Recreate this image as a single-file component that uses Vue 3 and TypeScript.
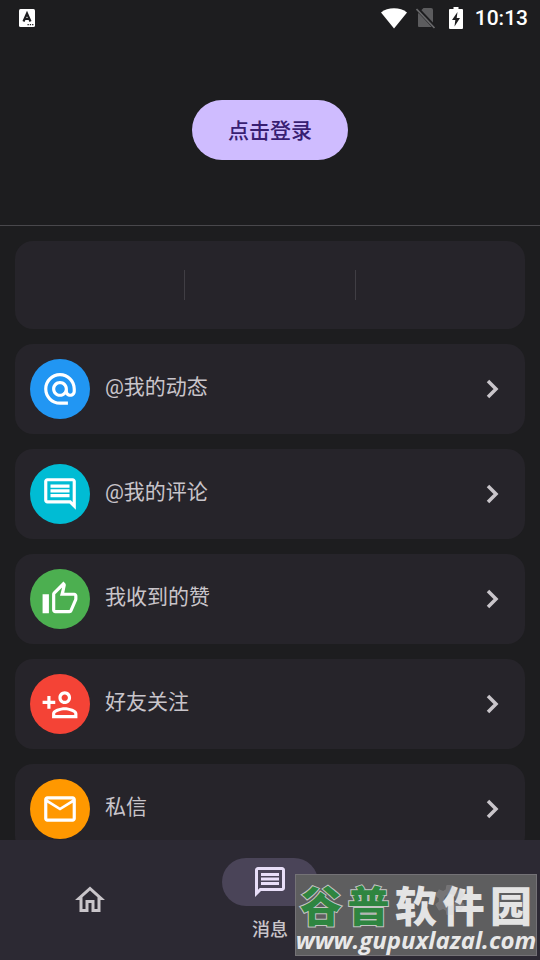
<script setup lang="ts">
interface Entry {
  id: string
  label: string
  color: string
  path: string
}

const entries: Entry[] = [
  {
    id: 'at-feed',
    label: '@我的动态',
    color: '#2196f3',
    path: 'M12 1.95c-5.52 0-10 4.48-10 10s4.48 10 10 10h5v-2h-5c-4.34 0-8-3.66-8-8s3.66-8 8-8 8 3.66 8 8v1.43c0 .79-.71 1.57-1.5 1.57s-1.5-.78-1.5-1.57v-1.43c0-2.76-2.24-5-5-5s-5 2.24-5 5 2.24 5 5 5c1.38 0 2.64-.56 3.54-1.47.65.89 1.77 1.47 2.96 1.47 1.97 0 3.5-1.6 3.5-3.57v-1.43c0-5.52-4.48-10-10-10zm0 13c-1.66 0-3-1.34-3-3s1.34-3 3-3 3 1.34 3 3-1.34 3-3 3z',
  },
  {
    id: 'at-comment',
    label: '@我的评论',
    color: '#00bcd4',
    path: 'M21.99 4c0-1.1-.89-2-1.99-2H4c-1.1 0-2 .9-2 2v12c0 1.1.9 2 2 2h14l4 4-.01-18zM20 4v13.17L18.83 16H4V4h16zM6 12h12v2H6zm0-3h12v2H6zm0-3h12v2H6z',
  },
  {
    id: 'likes',
    label: '我收到的赞',
    color: '#4caf50',
    path: 'M9 21h9c.83 0 1.54-.5 1.84-1.22l3.02-7.05c.09-.23.14-.47.14-.73v-2c0-1.1-.9-2-2-2h-6.31l.95-4.57.03-.32c0-.41-.17-.79-.44-1.06L14.17 1 7.58 7.59C7.22 7.95 7 8.45 7 9v10c0 1.1.9 2 2 2zM9 9l4.34-4.34L12 10h9v2l-3 7H9V9zM1 9h4v12H1z',
  },
  {
    id: 'follow',
    label: '好友关注',
    color: '#f44336',
    path: 'M15 12c2.21 0 4-1.79 4-4s-1.79-4-4-4-4 1.79-4 4 1.79 4 4 4zm0-6c1.1 0 2 .9 2 2s-.9 2-2 2-2-.9-2-2 .9-2 2-2zm0 8c-2.67 0-8 1.34-8 4v3h16v-3c0-2.66-5.33-4-8-4zm6 5H9v-.99C9.2 17.29 12.3 16 15 16s5.8 1.29 6 2v1zM6 15v-3h3v-2H6V7H4v3H1v2h3v3z',
  },
  {
    id: 'mail',
    label: '私信',
    color: '#ff9800',
    path: 'M22 6c0-1.1-.9-2-2-2H4c-1.1 0-2 .9-2 2v12c0 1.1.9 2 2 2h16c1.1 0 2-.9 2-2V6zm-2 0l-8 5-8-5h16zm0 12H4V8l8 5 8-5v10z',
  },
]
</script>

<template>
  <div class="screen">
    <header class="status">
      <svg class="ime" viewBox="0 0 16 18" aria-hidden="true">
        <rect width="16" height="18" rx="1.5" fill="#fff" />
        <path d="M4.5 12.5L8 4.5l3.500 8M5.800 10h4.400" fill="none" stroke="#1d1d1f" stroke-width="2.200" />
        <path d="M8.500 15.700h6" stroke="#1d1d1f" stroke-width="1.300" stroke-dasharray="1.300 1" />
      </svg>
      <div class="indicators">
        <svg class="wifi" viewBox="0 0 26 21" aria-hidden="true">
          <path d="M13 20.500L0 4.500C3.500 1.700 8 .3 13 .3s9.500 1.400 13 4.200z" fill="#fff" />
        </svg>
        <svg class="sim" viewBox="0 0 20 22" aria-hidden="true">
          <path d="M7.500 1H15q2 0 2 2v17H3q-1 0-1-1V6.500z" fill="#5c5c5e" />
          <path d="M1 1.500L19 20.500" stroke="#1d1d1f" stroke-width="4" />
          <path d="M.5 2L18.500 21" stroke="#69696b" stroke-width="1.700" />
        </svg>
        <svg class="battery" viewBox="0 0 14 22" aria-hidden="true">
          <path d="M4.500 0h5v2H13q1 0 1 1v18q0 1-1 1H1q-1 0-1-1V3q0-1 1-1h3.500z" fill="#fff" />
          <path d="M8.500 5L3 13h3.300L5.500 19.500 11 11H7.700z" fill="#1d1d1f" />
        </svg>
        <time class="clock">10:13</time>
      </div>
    </header>

    <main class="content">
      <section class="account">
        <button class="login" type="button">点击登录</button>
      </section>

      <div class="cards">
        <div class="card summary">
          <span class="cell"></span>
          <span class="cell"></span>
          <span class="cell"></span>
        </div>
        <a v-for="entry in entries" :key="entry.id" class="card entry" :href="`#${entry.id}`">
          <span class="badge" :style="{ backgroundColor: entry.color }">
            <svg class="badge-icon" viewBox="0 0 24 24" aria-hidden="true"><path :d="entry.path" /></svg>
          </span>
          <span class="label">{{ entry.label }}</span>
          <svg class="chevron" viewBox="0 0 24 24" aria-hidden="true">
            <path d="M8.800 5.600L15.200 12l-6.400 6.400" />
          </svg>
        </a>
      </div>
    </main>

    <nav class="tabs">
      <a class="tab" href="#home" aria-label="首页">
        <svg class="tab-icon" viewBox="0 0 24 24" aria-hidden="true">
          <path d="M12 5.690l5 4.500V18h-2v-6H9v6H7v-7.810l5-4.500M12 3L2 12h3v8h6v-6h2v6h6v-8h3L12 3z" />
        </svg>
      </a>
      <a class="tab active" href="#messages" aria-current="page">
        <span class="pill">
          <svg class="tab-icon" viewBox="0 0 24 24" aria-hidden="true">
            <path d="M4 4h16v12H5.170L4 17.170V4m0-2c-1.100 0-1.990.9-1.990 2L2 22l4-4h14c1.100 0 2-.9 2-2V4c0-1.100-.9-2-2-2H4zm2 10h12v2H6zm0-3h12v2H6zm0-3h12v2H6z" />
          </svg>
        </span>
        <span class="tab-label">消息</span>
      </a>
      <a class="tab settings" href="#settings" aria-label="设置">
        <svg class="tab-icon" viewBox="0 0 24 24" aria-hidden="true">
          <path fill-rule="evenodd" d="M19.430 12.980c.04-.32.07-.64.07-.98s-.03-.66-.07-.98l2.110-1.650c.19-.15.24-.42.12-.64l-2-3.460c-.12-.22-.39-.3-.61-.22l-2.490 1c-.52-.4-1.080-.73-1.690-.98l-.38-2.650C14.460 2.180 14.250 2 14 2h-4c-.25 0-.46.18-.49.42l-.38 2.650c-.61.25-1.170.59-1.690.98l-2.490-1c-.23-.09-.49 0-.61.22l-2 3.460c-.13.22-.07.49.12.64l2.110 1.650c-.04.32-.07.65-.07.98s.03.66.07.98l-2.110 1.650c-.19.15-.24.42-.12.64l2 3.460c.12.22.39.3.61.22l2.490-1c.52.4 1.080.73 1.690.98l.38 2.650c.03.24.24.42.49.42h4c.25 0 .46-.18.49-.42l.38-2.650c.61-.25 1.170-.59 1.690-.98l2.490 1c.23.09.49 0 .61-.22l2-3.460c.12-.22.07-.49-.12-.64zM12 8a4 4 0 1 0 0 8 4 4 0 0 0 0-8z" />
        </svg>
      </a>
    </nav>

    <aside class="watermark">
      <div class="brand">
        <span class="green">谷</span><span class="green">普</span>
        <span class="white">软</span><span class="white">件</span><span class="white">园</span>
      </div>
      <div class="site">www.gupuxlazal.com</div>
    </aside>
  </div>
</template>

<style>
body {
  margin: 0;
  background: #1d1d1f;
}
</style>

<style scoped>
.screen {
  position: relative;
  display: flex;
  flex-direction: column;
  height: 100vh;
  overflow: hidden;
  background: #1d1d1f;
  color: #c9c5ca;
  font-family: Roboto, "Noto Sans CJK SC", sans-serif;
}

.status {
  display: flex;
  flex: none;
  align-items: center;
  justify-content: space-between;
  height: 36px;
  padding: 0 12px 0 19px;
}

.ime {
  width: 16px;
  height: 18px;
}

.indicators {
  display: flex;
  align-items: center;
}

.wifi {
  width: 26px;
  height: 21px;
}

.sim {
  width: 20px;
  height: 22px;
  margin-left: 9px;
}

.battery {
  width: 14px;
  height: 22px;
  margin-left: 13px;
}

.clock {
  margin-left: 12px;
  color: #fff;
  font-size: 21px;
  font-weight: 500;
  line-height: 36px;
}

.content {
  flex: 1;
  min-height: 0;
  overflow: hidden;
}

.account {
  display: flex;
  justify-content: center;
  padding: 64px 0 65px;
  border-bottom: 1px solid #49484c;
}

.login {
  height: 60px;
  padding: 2px 36px 0;
  border: 0;
  border-radius: 30px;
  background: #cfbcff;
  color: #381e72;
  font: 500 21px/58px Roboto, "Noto Sans CJK SC", sans-serif;
}

.cards {
  display: flex;
  flex-direction: column;
  gap: 15px;
  padding: 15px;
}

.card {
  border-radius: 18px;
  background: #26242a;
}

.summary {
  display: flex;
  align-items: center;
  height: 88px;
}

.cell {
  flex: 1;
  box-sizing: border-box;
  height: 30px;
}

.cell:not(:last-child) {
  border-right: 1px solid #403e44;
}

.entry {
  display: flex;
  align-items: center;
  gap: 15px;
  height: 90px;
  box-sizing: border-box;
  padding: 15px;
  color: inherit;
  text-decoration: none;
}

.badge {
  display: flex;
  flex: none;
  align-items: center;
  justify-content: center;
  width: 60px;
  height: 60px;
  border-radius: 50%;
}

.badge-icon {
  width: 38px;
  height: 38px;
  fill: #fff;
}

.label {
  flex: 1;
  padding-bottom: 4px;
  font-size: 21px;
  line-height: 32px;
}

.chevron {
  width: 30px;
  height: 30px;
  margin-right: 3px;
  fill: none;
  stroke: #c9c5ca;
  stroke-width: 2.8;
}

.tabs {
  display: grid;
  flex: none;
  grid-template-columns: repeat(3, 1fr);
  height: 120px;
  background: #2c2933;
}

.tab {
  display: flex;
  flex-direction: column;
  align-items: center;
  justify-content: center;
  color: #c9c5ca;
  text-decoration: none;
}

.tab-icon {
  width: 36px;
  height: 36px;
  fill: currentColor;
}

/* The settings icon stays faintly visible above the watermark. */
.settings {
  z-index: 1;
  opacity: 0.22;
}

.pill {
  display: flex;
  align-items: center;
  justify-content: center;
  width: 96px;
  height: 48px;
  border-radius: 24px;
  background: #4a4458;
  color: #e8def8;
}

.tab-label {
  padding-top: 10px;
  margin-bottom: -2px;
  font-size: 18px;
  font-weight: 500;
  line-height: 28px;
}

.watermark {
  position: absolute;
  right: 3px;
  bottom: 4px;
  box-sizing: border-box;
  width: 242px;
  height: 82px;
  border: 1px solid #747276;
  background: #5e5e5f;
  white-space: nowrap;
}

.brand {
  display: flex;
  justify-content: space-between;
  padding: 8px 4px 4px;
  font-family: "Noto Sans CJK SC", sans-serif;
  font-size: 42px;
  font-weight: 900;
  line-height: 42px;
}

.green {
  color: #2e8540;
  paint-order: stroke fill;
  -webkit-text-stroke: 2px #c4c4c4;
}

.white {
  color: #e4e4e4;
}

.site {
  display: flex;
  justify-content: center;
  color: #e8e8e8;
  font: italic 700 24px/22px "Open Sans", sans-serif;
}
</style>
